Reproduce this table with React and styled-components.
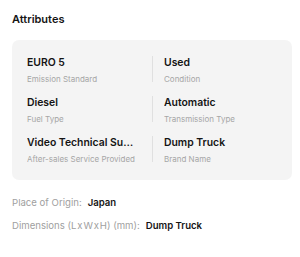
import React from "react";
import styled, { createGlobalStyle } from "styled-components";

const GlobalStyle = createGlobalStyle`
  body {
    margin: 0;
    background: #ffffff;
    font-family: Inter, "Liberation Sans", sans-serif;
    -webkit-font-smoothing: antialiased;
  }
`;

const attributes = [
  { value: "EURO 5", label: "Emission Standard" },
  { value: "Used", label: "Condition" },
  { value: "Diesel", label: "Fuel Type" },
  { value: "Automatic", label: "Transmission Type" },
  { value: "Video Technical Support", label: "After-sales Service Provided" },
  { value: "Dump Truck", label: "Brand Name" },
];

// hair spaces keep "L x W x H" as tight as in the design
const details = [
  { name: "Place of Origin:", value: "Japan" },
  { name: "Dimensions (L\u200Ax\u200AW\u200Ax\u200AH) (mm):", value: "Dump Truck" },
];

const App = () => {
  return (
    <Page>
      <GlobalStyle />
      <Title>Attributes</Title>
      <Card>
        {attributes.map((item, i) => (
          <Cell key={item.label} right={i % 2 === 1}>
            <Value>{item.value}</Value>
            <Label>{item.label}</Label>
          </Cell>
        ))}
      </Card>
      <DetailList>
        {details.map((d) => (
          <DetailRow key={d.name}>
            <DetailName>{d.name}</DetailName>
            <DetailValue>{d.value}</DetailValue>
          </DetailRow>
        ))}
      </DetailList>
    </Page>
  );
};

export default App;

const Page = styled.div`
  width: 300px;
  box-sizing: border-box;
  padding: 12px 8px 12px 12px;
`;

const Title = styled.h2`
  margin: 0;
  font-size: 11px;
  line-height: 14px;
  font-weight: 600;
  color: #141414;
`;

const Card = styled.div`
  margin-top: 14px;
  display: grid;
  grid-template-columns: 1fr 1fr;
  row-gap: 14px;
  padding: 16px 15px 18px;
  background: #f4f4f4;
  border-radius: 7px;
`;

const Cell = styled.div`
  min-width: 0;
  height: 26px;
  padding: ${({ right }) => (right ? "0 0 0 11px" : "0 15px 0 0")};
  border-left: ${({ right }) => (right ? "1px solid #e0e0e0" : "none")};
`;

const Value = styled.div`
  font-size: 10.4px;
  line-height: 13px;
  font-weight: 600;
  color: #141414;
  white-space: nowrap;
  overflow: hidden;
  text-overflow: ellipsis;
`;

const Label = styled.div`
  margin-top: 5px;
  font-size: 8px;
  line-height: 10px;
  color: #a6a6a6;
  white-space: nowrap;
  overflow: hidden;
  text-overflow: ellipsis;
`;

const DetailList = styled.div`
  margin-top: 17px;
  display: flex;
  flex-direction: column;
  gap: 11px;
`;

const DetailRow = styled.div`
  display: flex;
  gap: 6px;
  font-size: 9.6px;
  line-height: 12px;
`;

const DetailName = styled.span`
  color: #a0a0a0;
`;

const DetailValue = styled.span`
  color: #141414;
  font-weight: 600;
`;
